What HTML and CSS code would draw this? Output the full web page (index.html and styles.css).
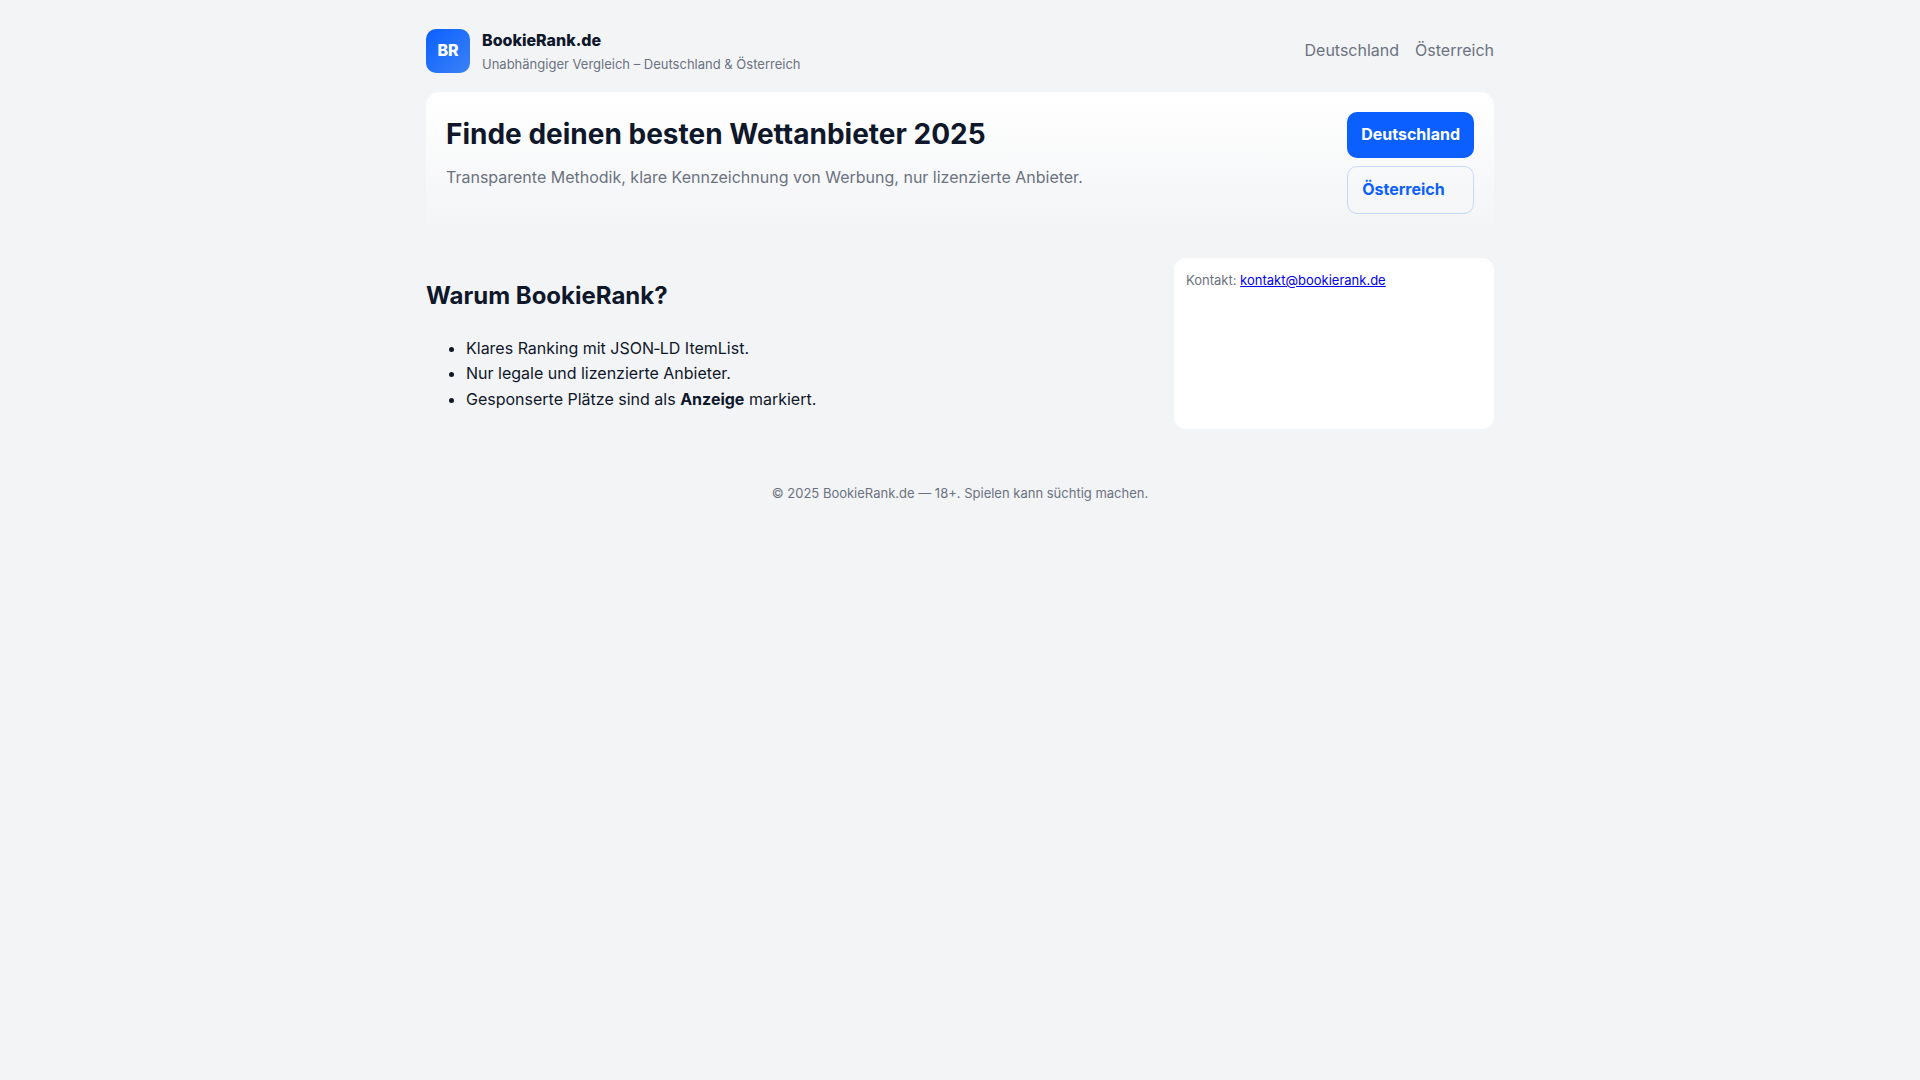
FILE: index.html
```html
<!DOCTYPE html>
<html lang="de">
<head>
<meta charset="UTF-8" />
<meta name="viewport" content="width=device-width,initial-scale=1" />
<title>BookieRank.de</title>
<link rel="stylesheet" href="styles.css">
</head>
<body>
  <div class="container">
    <header class="header">
      <div class="brand">
        <div class="logo">BR</div>
        <div>
          <div class="name">BookieRank.de</div>
          <div class="small">Unabhängiger Vergleich – Deutschland &amp; Österreich</div>
        </div>
      </div>
      <nav class="nav">
        <a href="#de">Deutschland</a>
        <a href="#at">Österreich</a>
      </nav>
    </header>

    <section class="hero">
      <div>
        <h1>Finde deinen besten Wettanbieter 2025</h1>
        <p>Transparente Methodik, klare Kennzeichnung von Werbung, nur lizenzierte Anbieter.</p>
      </div>
      <div class="actions">
        <a class="btn" href="#de">Deutschland</a>
        <a class="btn secondary" href="#at">Österreich</a>
      </div>
    </section>

    <main class="grid">
      <section>
        <h2>Warum BookieRank?</h2>
        <ul>
          <li>Klares Ranking mit JSON‑LD ItemList.</li>
          <li>Nur legale und lizenzierte Anbieter.</li>
          <li>Gesponserte Plätze sind als <strong>Anzeige</strong> markiert.</li>
        </ul>
      </section>
      <aside class="card small">
        Kontakt: <a href="mailto:kontakt@bookierank.de">kontakt@bookierank.de</a>
      </aside>
    </main>

    <footer class="footer">© 2025 BookieRank.de — 18+. Spielen kann süchtig machen.</footer>
  </div>
</body>
</html>
```
FILE: styles.css
```css
:root { --bg: #f3f4f6; --text: #0f172a; --muted: #6b7280; --accent: #0b5fff; }
* { box-sizing: border-box; }
body { margin: 0; font-family: Inter, system-ui, sans-serif; font-size: 16px; line-height: 1.6; background: var(--bg); color: var(--text); }
.container { max-width: 1100px; margin: 28px auto; padding: 0 16px; }
.header { display: flex; align-items: center; justify-content: space-between; margin-bottom: 18px; }
.brand { display: flex; align-items: center; gap: 12px; }
.logo { width: 44px; height: 44px; border-radius: 10px; background: linear-gradient(135deg, #0b5fff, #3b82f6); color: #fff; display: flex; align-items: center; justify-content: center; font-weight: 800; }
.name { font-weight: 800; }
.small { font-size: 13px; color: var(--muted); }
.nav { display: flex; gap: 16px; }
.nav a { color: var(--muted); text-decoration: none; }
.hero { display: flex; justify-content: space-between; gap: 20px; padding: 20px; border-radius: 14px; background: linear-gradient(180deg, #fff, var(--bg)); margin-bottom: 24px; }
.hero h1 { margin: 0 0 8px; font-size: 28px; }
.hero p { margin: 0; color: var(--muted); }
.actions { display: flex; flex-direction: column; gap: 8px; }
.btn { padding: 10px 14px; border-radius: 10px; background: var(--accent); color: #fff; font-weight: 700; text-decoration: none; }
.btn.secondary { background: transparent; color: var(--accent); border: 1px solid rgba(11,95,255,0.2); }
.grid { display: grid; grid-template-columns: 1fr 320px; gap: 20px; }
.card { background: #fff; border-radius: 12px; padding: 12px; }
.footer { margin-top: 40px; padding: 14px 0; text-align: center; font-size: 13px; color: var(--muted); }
```
